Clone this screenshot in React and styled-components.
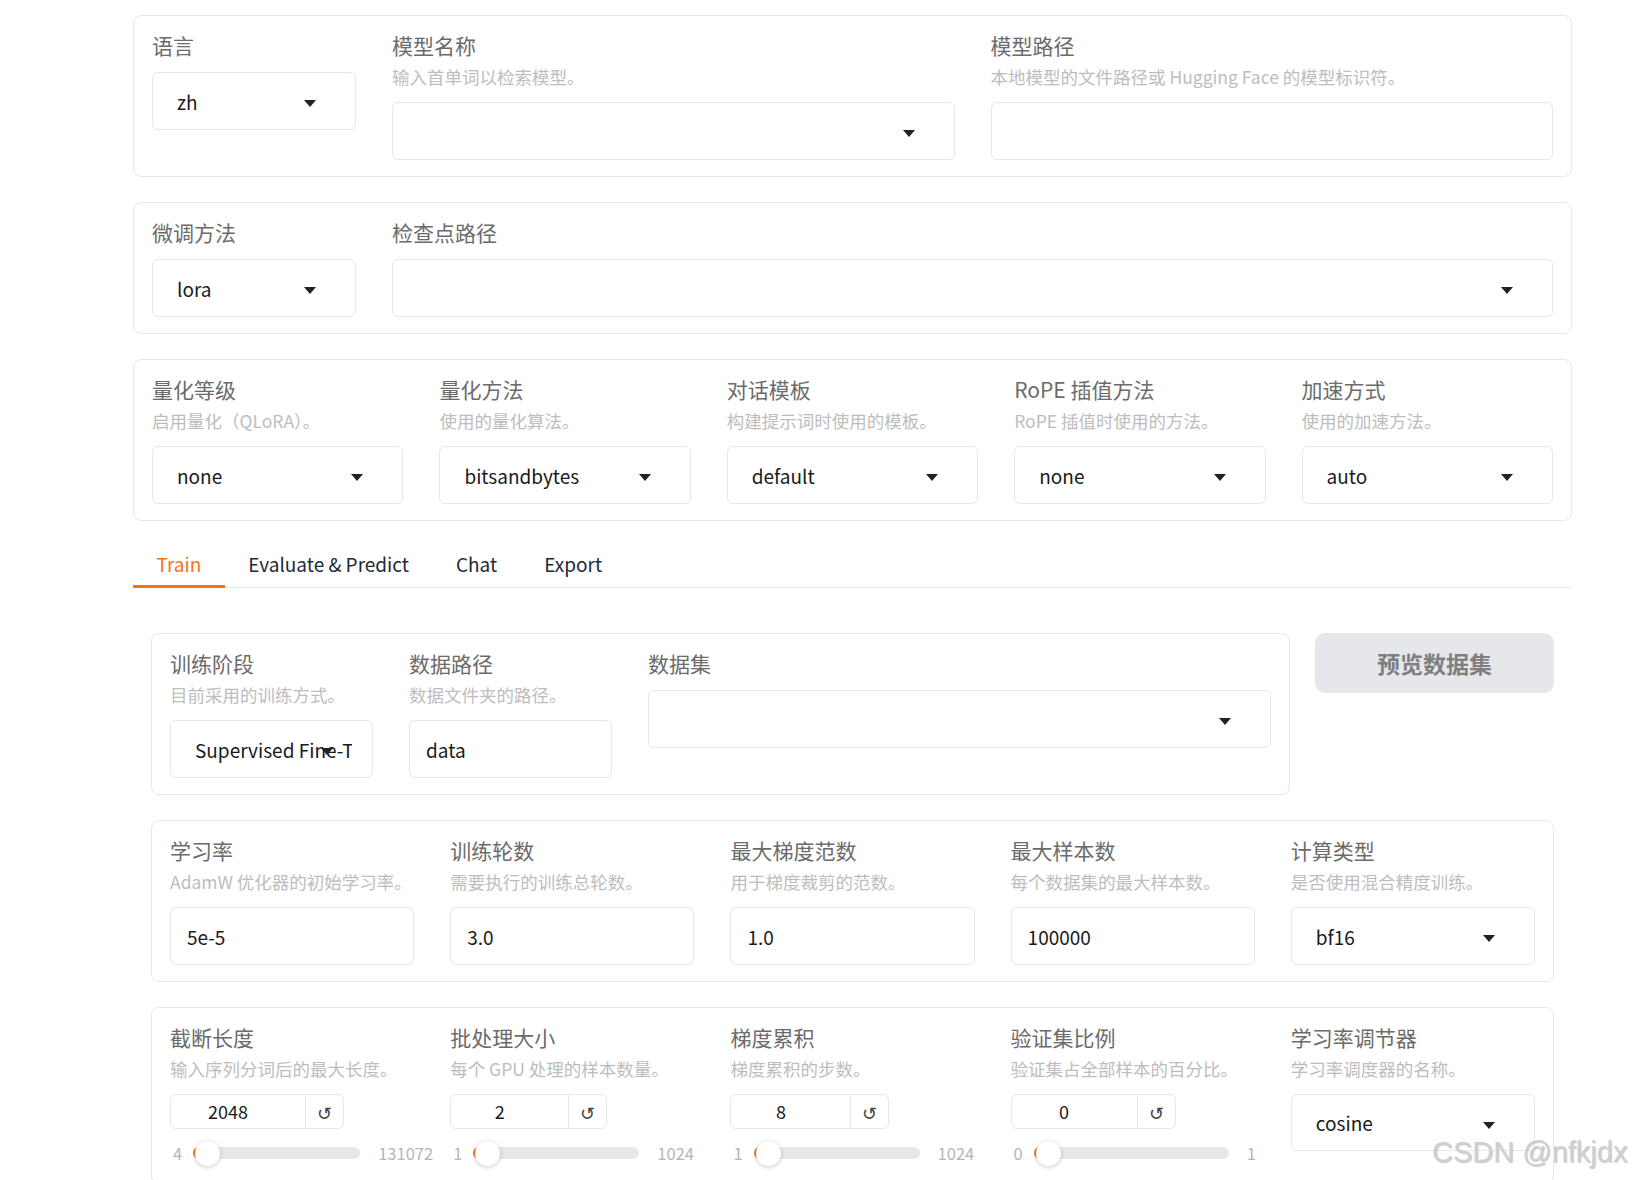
import React from 'react';
import styled, { createGlobalStyle } from 'styled-components';

const Global = createGlobalStyle`
  html, body { margin: 0; padding: 0; background: #fff; }
  body {
    font-family: "Noto Sans CJK SC", "Noto Sans", sans-serif;
    color: #1a1a1a;
  }
  * { box-sizing: border-box; }
`;

const Page = styled.div`
  position: relative;
  min-height: 1180px;
  padding: 15px 62px 0 133px;
  display: flex;
  flex-direction: column;
  gap: 25px;
`;

const Panel = styled.div`
  border: 1px solid #e5e7eb;
  border-radius: 8px;
  background: #fff;
  padding: 15px 18px 16px;
  display: grid;
  grid-template-columns: ${(p) => p.$cols};
  column-gap: 36px;
  align-items: start;
`;

const FieldBox = styled.div`
  display: flex;
  flex-direction: column;
  min-width: 0;
`;

const Label = styled.div`
  font-size: 21px;
  line-height: 28px;
  color: #6b6b6b;
  white-space: nowrap;
`;

const Info = styled.div`
  margin-top: 6px;
  font-size: 17.5px;
  line-height: 24px;
  color: #bdbdbd;
  white-space: nowrap;
`;

const Control = styled.div`
  margin-top: 13px;
`;

const DropBox = styled.div`
  position: relative;
  height: ${(p) => p.$h || 58}px;
  border: 1px solid #e5e7eb;
  border-radius: 6px;
  padding: 0 20px 0 24px;
  display: flex;
  align-items: center;
  font-size: 19px;
  color: #1a1a1a;
  background: #fff;
`;

const ValueText = styled.span`
  flex: 1;
  min-width: 0;
  overflow: hidden;
  white-space: nowrap;
`;

const Arrow = styled.svg`
  position: absolute;
  right: 39px;
  top: calc(50% - 1px);
  width: 12px;
  height: 7px;
`;

const TextBox = styled.div`
  height: 58px;
  border: 1px solid #e5e7eb;
  border-radius: 6px;
  padding: 0 16px;
  display: flex;
  align-items: center;
  font-size: 19px;
  color: #1a1a1a;
  background: #fff;
`;

const TabBar = styled.div`
  display: flex;
  border-bottom: 1px solid #e5e7eb;
`;

const Tab = styled.div`
  height: 42px;
  padding: 0 23.5px 4px;
  display: flex;
  align-items: center;
  font-size: 19px;
  color: ${(p) => (p.$active ? '#f97316' : '#1f2937')};
  border-bottom: 3px solid ${(p) => (p.$active ? '#f97316' : 'transparent')};
  margin-bottom: -1px;
`;

const TabPanel = styled.div`
  padding: 20px 18px 0;
  display: flex;
  flex-direction: column;
  gap: 25px;
`;

const SplitRow = styled.div`
  display: grid;
  grid-template-columns: 1fr 239px;
  column-gap: 25px;
  align-items: start;
`;

const PreviewButton = styled.button`
  height: 60px;
  border: none;
  border-radius: 10px;
  background: #e5e7eb;
  color: #7f7f7f;
  font-family: "Noto Sans CJK SC", sans-serif;
  font-weight: 700;
  font-size: 23px;
  cursor: pointer;
`;

const NumberBox = styled.div`
  width: ${(p) => p.$w}px;
  height: 35px;
  border: 1px solid #e5e7eb;
  border-radius: 6px;
  display: flex;
  background: #fff;
`;

const NumberValue = styled.div`
  flex: 1;
  text-align: center;
  padding-right: 20px;
  line-height: 33px;
  font-size: 18px;
  color: #1a1a1a;
`;

const ResetButton = styled.div`
  width: 38px;
  border-left: 1px solid #e5e7eb;
  display: flex;
  align-items: center;
  justify-content: center;
  font-size: 18px;
  color: #444;
`;

const SliderRow = styled.div`
  margin-top: 10px;
  height: 28px;
  padding-left: 3px;
  display: flex;
  align-items: center;
  white-space: nowrap;
`;

const RangeLabel = styled.span`
  font-size: 16.5px;
  color: #b5b5b5;
  margin: ${(p) => (p.$side === 'min' ? '0 11px 0 0' : '0 0 0 18px')};
`;

const Track = styled.div`
  position: relative;
  flex: none;
  width: ${(p) => p.$w}px;
  height: 12px;
  border-radius: 6px;
  background: #e5e7eb;
`;

const TrackFill = styled.div`
  position: absolute;
  left: 0;
  top: 0;
  width: 15px;
  height: 100%;
  border-radius: 6px 0 0 6px;
  background: #f97316;
`;

const Thumb = styled.div`
  position: absolute;
  left: 2px;
  top: 50%;
  width: 25px;
  height: 25px;
  margin-top: -12.5px;
  border-radius: 50%;
  background: #fff;
  box-shadow: 0 1px 4px rgba(0, 0, 0, 0.22);
`;

const Watermark = styled.div`
  position: absolute;
  left: 1432px;
  top: 1138px;
  font-family: "Liberation Sans", Arial, sans-serif;
  font-size: 29px;
  line-height: 1;
  color: #d0d0d0;
  text-shadow: 1px 1px 1px rgba(0, 0, 0, 0.22), -1px -1px 0 rgba(255, 255, 255, 0.8);
  white-space: nowrap;
  pointer-events: none;
`;

const Field = ({ label, info, children }) => (
  <FieldBox>
    <Label>{label}</Label>
    {info && <Info>{info}</Info>}
    <Control>{children}</Control>
  </FieldBox>
);

const Dropdown = ({ value, h }) => (
  <DropBox $h={h}>
    <ValueText>{value}</ValueText>
    <Arrow viewBox="0 0 12 7">
      <polygon points="0,0 12,0 6,7" fill="#222" />
    </Arrow>
  </DropBox>
);

const SliderField = ({ label, info, value, w, min, max, track }) => (
  <FieldBox>
    <Label>{label}</Label>
    <Info>{info}</Info>
    <Control>
      <NumberBox $w={w}>
        <NumberValue>{value}</NumberValue>
        <ResetButton>↺</ResetButton>
      </NumberBox>
      <SliderRow>
        <RangeLabel $side="min">{min}</RangeLabel>
        <Track $w={track}>
          <TrackFill />
          <Thumb />
        </Track>
        <RangeLabel $side="max">{max}</RangeLabel>
      </SliderRow>
    </Control>
  </FieldBox>
);

export default function App() {
  return (
    <>
      <Global />
      <Page>
        <Panel $cols="204px 1fr 1fr">
          <Field label="语言">
            <Dropdown value="zh" />
          </Field>
          <Field label="模型名称" info="输入首单词以检索模型。">
            <Dropdown value="" />
          </Field>
          <Field label="模型路径" info="本地模型的文件路径或 Hugging Face 的模型标识符。">
            <TextBox />
          </Field>
        </Panel>

        <Panel $cols="204px 1fr">
          <Field label="微调方法">
            <Dropdown value="lora" />
          </Field>
          <Field label="检查点路径">
            <Dropdown value="" />
          </Field>
        </Panel>

        <Panel $cols="repeat(5, 1fr)">
          <Field label="量化等级" info="启用量化（QLoRA）。">
            <Dropdown value="none" />
          </Field>
          <Field label="量化方法" info="使用的量化算法。">
            <Dropdown value="bitsandbytes" />
          </Field>
          <Field label="对话模板" info="构建提示词时使用的模板。">
            <Dropdown value="default" />
          </Field>
          <Field label="RoPE 插值方法" info="RoPE 插值时使用的方法。">
            <Dropdown value="none" />
          </Field>
          <Field label="加速方式" info="使用的加速方法。">
            <Dropdown value="auto" />
          </Field>
        </Panel>

        <TabBar>
          <Tab $active>Train</Tab>
          <Tab>Evaluate &amp; Predict</Tab>
          <Tab>Chat</Tab>
          <Tab>Export</Tab>
        </TabBar>

        <TabPanel>
          <SplitRow>
            <Panel $cols="203px 203px 1fr">
              <Field label="训练阶段" info="目前采用的训练方式。">
                <Dropdown value="Supervised Fine-Tuning" />
              </Field>
              <Field label="数据路径" info="数据文件夹的路径。">
                <TextBox>data</TextBox>
              </Field>
              <Field label="数据集">
                <Dropdown value="" />
              </Field>
            </Panel>
            <PreviewButton>预览数据集</PreviewButton>
          </SplitRow>

          <Panel $cols="repeat(5, 1fr)">
            <Field label="学习率" info="AdamW 优化器的初始学习率。">
              <TextBox>5e-5</TextBox>
            </Field>
            <Field label="训练轮数" info="需要执行的训练总轮数。">
              <TextBox>3.0</TextBox>
            </Field>
            <Field label="最大梯度范数" info="用于梯度裁剪的范数。">
              <TextBox>1.0</TextBox>
            </Field>
            <Field label="最大样本数" info="每个数据集的最大样本数。">
              <TextBox>100000</TextBox>
            </Field>
            <Field label="计算类型" info="是否使用混合精度训练。">
              <Dropdown value="bf16" />
            </Field>
          </Panel>

          <Panel $cols="repeat(5, 1fr)">
            <SliderField label="截断长度" info="输入序列分词后的最大长度。" value="2048" w={174} min="4" max="131072" track={167} />
            <SliderField label="批处理大小" info="每个 GPU 处理的样本数量。" value="2" w={157} min="1" max="1024" track={166} />
            <SliderField label="梯度累积" info="梯度累积的步数。" value="8" w={159} min="1" max="1024" track={166} />
            <SliderField label="验证集比例" info="验证集占全部样本的百分比。" value="0" w={165} min="0" max="1" track={195} />
            <Field label="学习率调节器" info="学习率调度器的名称。">
              <Dropdown value="cosine" h={57} />
            </Field>
          </Panel>
        </TabPanel>

        <Watermark>CSDN @nfkjdx</Watermark>
      </Page>
    </>
  );
}
